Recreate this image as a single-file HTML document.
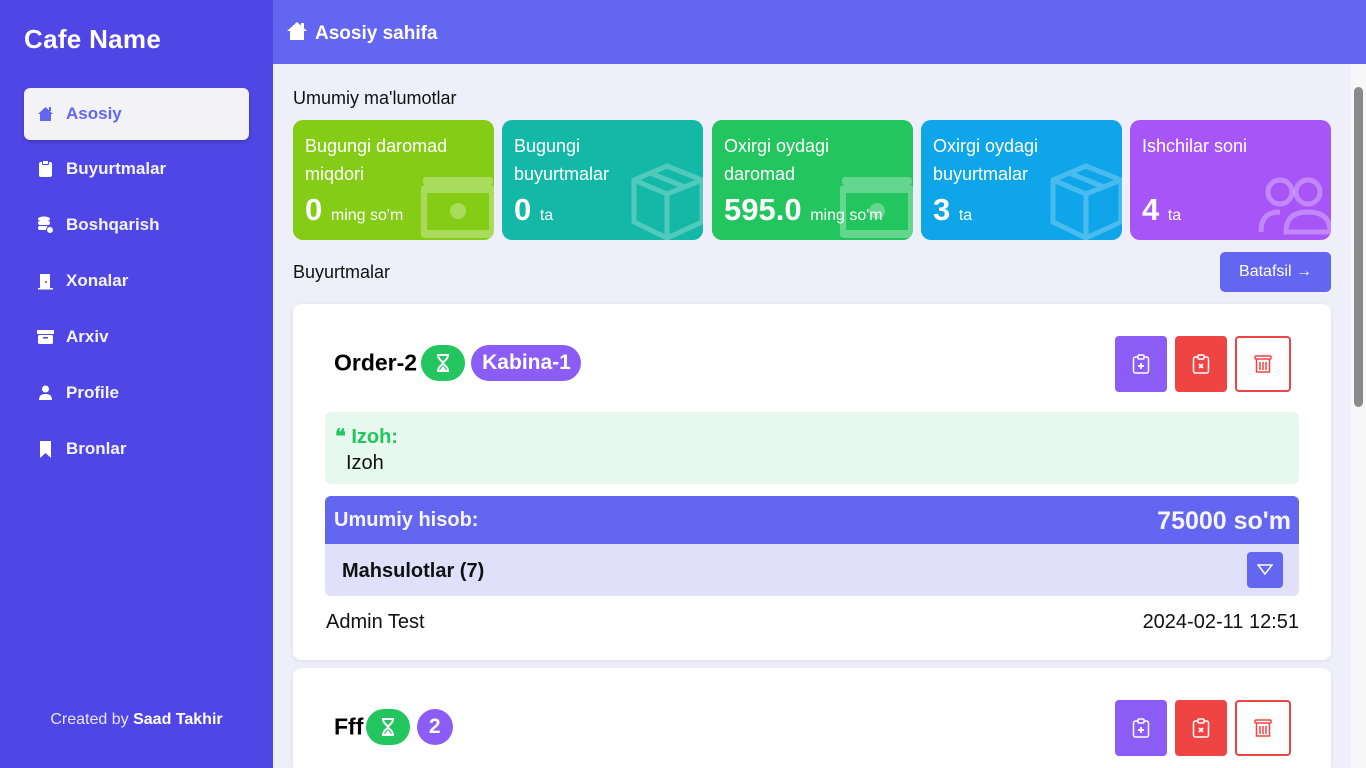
<!DOCTYPE html>
<html><head><meta charset="utf-8"><style>
*{box-sizing:border-box;margin:0;padding:0}
html{width:1366px;height:768px;overflow:hidden}
body{width:1366px;height:768px;overflow:hidden;font-family:"Liberation Sans",sans-serif;background:#efeffb;position:relative}
.a{position:absolute}
.side{left:0;top:0;width:273px;height:768px;background:#4f46e5;color:#fff}
.nav{position:absolute;left:24px;width:225px;height:52px;display:flex;align-items:center;font-weight:bold;font-size:17px;color:#f3f3fb}
.nav svg{margin-left:13px;margin-right:12px}
.hdr{left:273px;top:0;width:1093px;height:64px;background:#6366f1;color:#fff;font-weight:bold;font-size:19px}
.card{position:absolute;top:120px;width:201px;height:120px;border-radius:10px;color:#fff;overflow:hidden;padding:12px 12px}
.card .t{font-size:18px;line-height:28px;position:relative;z-index:2}
.card .v{position:absolute;left:12px;top:72px;font-size:31px;font-weight:bold;z-index:2;white-space:nowrap}
.card .v small{font-size:16px;font-weight:normal}
.card svg{position:absolute;z-index:1}
.ord{position:absolute;left:293px;width:1038px;background:#fff;border-radius:8px;box-shadow:0 1px 4px rgba(0,0,0,.08);overflow:hidden}
.btn{position:absolute;width:52px;height:56px;border-radius:4px;display:flex;align-items:center;justify-content:center}
.badge{display:inline-flex;align-items:center;justify-content:center;height:36px;border-radius:18px;color:#fff;font-weight:bold;font-size:21px;vertical-align:middle}
</style></head><body>
<div class="a side">
 <div class="a" style="left:24px;top:24px;font-size:26px;font-weight:bold;letter-spacing:0.3px">Cafe Name</div>
 <div class="nav" style="top:88px;background:#f3f3f6;border-radius:6px;color:#6366f1;box-shadow:0 2px 4px rgba(0,0,0,.2)"><svg width="17" height="16" viewBox="0 0 17 16"><path d="M8.5 1 L1 8 H3 V15 H14 V8 H16 Z" fill="#6366f1"/><rect x="12" y="1" width="2" height="4" fill="#6366f1"/></svg>Asosiy</div>
 <div class="nav" style="top:143px"><svg width="17" height="18" viewBox="0 0 17 18"><rect x="2" y="2" width="13" height="15" rx="2" fill="#fff"/><rect x="5.5" y="0.5" width="6" height="4" rx="1" fill="#fff" stroke="#4f46e5"/></svg>Buyurtmalar</div>
 <div class="nav" style="top:199px"><svg width="17" height="18" viewBox="0 0 17 18"><ellipse cx="7" cy="3" rx="6" ry="2.5" fill="#fff"/><rect x="1" y="5" width="12" height="4" rx="2" fill="#fff"/><rect x="1" y="10" width="10" height="4" rx="2" fill="#fff"/><circle cx="13" cy="14" r="3.5" fill="#fff" stroke="#4f46e5"/></svg>Boshqarish</div>
 <div class="nav" style="top:255px"><svg width="17" height="18" viewBox="0 0 17 18"><path d="M3 17V2H13V17" fill="#fff"/><rect x="1" y="16" width="15" height="1.5" fill="#fff"/><circle cx="9" cy="10" r="1" fill="#4f46e5"/></svg>Xonalar</div>
 <div class="nav" style="top:311px"><svg width="17" height="16" viewBox="0 0 17 16"><rect x="0" y="1" width="17" height="4" fill="#fff"/><rect x="1" y="6" width="15" height="9" rx="1.5" fill="#fff"/><rect x="6" y="8" width="5" height="1.5" fill="#4f46e5"/></svg>Arxiv</div>
 <div class="nav" style="top:367px"><svg width="17" height="16" viewBox="0 0 17 16"><circle cx="8.5" cy="4" r="3.5" fill="#fff"/><path d="M2 15C2 10 5 9 8.5 9S15 10 15 15Z" fill="#fff"/></svg>Profile</div>
 <div class="nav" style="top:423px"><svg width="17" height="18" viewBox="0 0 17 18"><path d="M3 1H14V18L8.5 13L3 18Z" fill="#fff"/></svg>Bronlar</div>
 <div class="a" style="left:0;width:273px;top:711px;text-align:center;font-size:16px;color:#e5e5fa">Created by <b style="color:#fff">Saad Takhir</b></div>
</div>
<div class="a hdr"><svg class="a" style="left:13px;top:21px" width="22" height="20" viewBox="0 0 22 20"><path d="M11 1L1 10H4V19H18V10H21Z" fill="#fff"/><rect x="15" y="2" width="3" height="5" fill="#fff"/></svg><span class="a" style="left:42px;top:23px">Asosiy sahifa</span></div>
<div class="a" style="left:1351px;top:64px;width:15px;height:704px;background:#f7f7f7"><div class="a" style="left:3px;top:23px;width:9px;height:320px;background:#8a8a8a;border-radius:5px"></div></div>
<div class="a" style="left:293px;top:88px;font-size:18px;color:#111">Umumiy ma'lumotlar</div>

<div class="card" style="left:293px;background:#84cc16"><div class="t">Bugungi daromad<br>miqdori</div><div class="v">0 <small>ming so'm</small></div>
<svg style="left:128px;top:55px" width="74" height="65" viewBox="0 0 74 65"><rect x="2" y="2" width="70" height="8" rx="3" fill="rgba(255,255,255,.3)"/><rect x="2" y="14" width="70" height="45" rx="3" fill="none" stroke="rgba(255,255,255,.3)" stroke-width="8"/><circle cx="37" cy="36" r="8" fill="rgba(255,255,255,.3)"/></svg></div>
<div class="card" style="left:502px;background:#14b8a6"><div class="t">Bugungi<br>buyurtmalar</div><div class="v">0 <small>ta</small></div>
<svg style="left:128px;top:42px" width="75" height="80" viewBox="0 0 75 80"><path d="M37 4L72 18V60L37 76L4 60V18Z M4 18L37 32L72 18 M37 32V76 M20 11L55 25" fill="none" stroke="rgba(255,255,255,.25)" stroke-width="5"/></svg></div>
<div class="card" style="left:712px;background:#22c55e"><div class="t">Oxirgi oydagi<br>daromad</div><div class="v">595.0 <small>ming so'm</small></div>
<svg style="left:128px;top:55px" width="74" height="65" viewBox="0 0 74 65"><rect x="2" y="2" width="70" height="8" rx="3" fill="rgba(255,255,255,.3)"/><rect x="2" y="14" width="70" height="45" rx="3" fill="none" stroke="rgba(255,255,255,.3)" stroke-width="8"/><circle cx="37" cy="36" r="8" fill="rgba(255,255,255,.3)"/></svg></div>
<div class="card" style="left:921px;background:#0ea5e9"><div class="t">Oxirgi oydagi<br>buyurtmalar</div><div class="v">3 <small>ta</small></div>
<svg style="left:128px;top:42px" width="75" height="80" viewBox="0 0 75 80"><path d="M37 4L72 18V60L37 76L4 60V18Z M4 18L37 32L72 18 M37 32V76 M20 11L55 25" fill="none" stroke="rgba(255,255,255,.25)" stroke-width="5"/></svg></div>
<div class="card" style="left:1130px;background:#a855f7"><div class="t">Ishchilar soni</div><div class="v">4 <small>ta</small></div>
<svg style="left:128px;top:55px" width="75" height="60" viewBox="0 0 75 60"><circle cx="22" cy="17" r="12" fill="none" stroke="rgba(255,255,255,.3)" stroke-width="5"/><circle cx="50" cy="17" r="12" fill="none" stroke="rgba(255,255,255,.3)" stroke-width="5"/><path d="M3 57C3 42 10 37 22 37 M28 57C28 42 37 37 50 37S72 42 72 57Z" fill="none" stroke="rgba(255,255,255,.3)" stroke-width="5"/></svg></div>

<div class="a" style="left:293px;top:262px;font-size:18px;color:#111">Buyurtmalar</div>
<div class="a" style="left:1220px;top:252px;width:111px;height:40px;background:#6366f1;border-radius:5px;color:#fff;font-size:16px;text-align:center;line-height:40px">Batafsil →</div>

<div class="ord" style="top:304px;height:356px">
 <div class="a" style="left:41px;top:41px;font-size:23px;font-weight:bold;color:#000;white-space:nowrap"><span style="vertical-align:middle">Order-2</span><span class="badge" style="width:44px;background:#22c55e;margin-left:4px"><svg width="14" height="18" viewBox="0 0 14 18"><path d="M1 1H13M1 17H13M2 1C2 6 7 7 7 9S2 12 2 17H12C12 12 7 11 7 9S12 6 12 1" fill="none" stroke="#fff" stroke-width="2"/><path d="M4 16L7 12L10 16Z" fill="#fff"/></svg></span> <span class="badge" style="width:110px;background:#8b5cf6">Kabina-1</span></div>
 <div class="btn" style="left:822px;top:32px;background:#8b5cf6"><svg width="18" height="20" viewBox="0 0 18 20"><rect x="1.5" y="3" width="15" height="16" rx="2" fill="none" stroke="#fff" stroke-width="1.5"/><rect x="6" y="1" width="6" height="4" rx="1" fill="#8b5cf6" stroke="#fff" stroke-width="1.5"/><path d="M9 9V15M6 12H12" stroke="#fff" stroke-width="1.8"/></svg></div>
 <div class="btn" style="left:882px;top:32px;background:#ef4444"><svg width="18" height="20" viewBox="0 0 18 20"><rect x="1.5" y="3" width="15" height="16" rx="2" fill="none" stroke="#fff" stroke-width="1.5"/><rect x="6" y="1" width="6" height="4" rx="1" fill="#ef4444" stroke="#fff" stroke-width="1.5"/><path d="M7 10L11 14M11 10L7 14" stroke="#fff" stroke-width="1.8"/></svg></div>
 <div class="btn" style="left:942px;top:32px;width:56px;border:2px solid #ef4444;background:#fff"><svg width="18" height="20" viewBox="0 0 18 20"><rect x="1" y="2" width="16" height="3" rx="1" fill="none" stroke="#ef4444" stroke-width="1.5"/><path d="M2.5 5.5V18H15.5V5.5M6 8V16M9 8V16M12 8V16" fill="none" stroke="#ef4444" stroke-width="1.5"/></svg></div>
 <div class="a" style="left:32px;top:108px;width:974px;height:72px;background:#e7f8ee;border-radius:6px">
  <div class="a" style="left:10px;top:12px;font-size:20px;font-weight:bold;color:#22c55e">❝ Izoh:</div>
  <div class="a" style="left:21px;top:40px;font-size:20px;color:#111">Izoh</div>
 </div>
 <div class="a" style="left:32px;top:192px;width:974px;height:100px;background:#e0e0fa;border-radius:6px;overflow:hidden">
  <div class="a" style="left:0;top:0;width:974px;height:48px;background:#6366f1;color:#f5f5ff;font-weight:bold">
   <span class="a" style="left:9px;top:13px;font-size:20px">Umumiy hisob:</span>
   <span class="a" style="right:8px;top:11px;font-size:25px">75000 so'm</span></div>
  <div class="a" style="left:17px;top:64px;font-size:20px;font-weight:bold;color:#111">Mahsulotlar (7)</div>
  <div class="a" style="left:922px;top:56px;width:36px;height:36px;background:#6366f1;border-radius:4px"><svg class="a" style="left:10px;top:12px" width="16" height="12" viewBox="0 0 16 12"><path d="M1 1H15L8 10Z" fill="none" stroke="#fff" stroke-width="1.5"/></svg></div>
 </div>
 <div class="a" style="left:33px;top:307px;font-size:20px;color:#111">Admin Test</div>
 <div class="a" style="right:32px;top:307px;font-size:20px;color:#111">2024-02-11 12:51</div>
</div>

<div class="ord" style="top:668px;height:100px;border-radius:8px 8px 0 0">
 <div class="a" style="left:41px;top:41px;font-size:23px;font-weight:bold;color:#000;white-space:nowrap"><span style="vertical-align:middle">Fff</span><span class="badge" style="width:44px;background:#22c55e;margin-left:3px"><svg width="14" height="18" viewBox="0 0 14 18"><path d="M1 1H13M1 17H13M2 1C2 6 7 7 7 9S2 12 2 17H12C12 12 7 11 7 9S12 6 12 1" fill="none" stroke="#fff" stroke-width="2"/><path d="M4 16L7 12L10 16Z" fill="#fff"/></svg></span> <span class="badge" style="width:36px;background:#8b5cf6">2</span></div>
 <div class="btn" style="left:822px;top:32px;background:#8b5cf6"><svg width="18" height="20" viewBox="0 0 18 20"><rect x="1.5" y="3" width="15" height="16" rx="2" fill="none" stroke="#fff" stroke-width="1.5"/><rect x="6" y="1" width="6" height="4" rx="1" fill="#8b5cf6" stroke="#fff" stroke-width="1.5"/><path d="M9 9V15M6 12H12" stroke="#fff" stroke-width="1.8"/></svg></div>
 <div class="btn" style="left:882px;top:32px;background:#ef4444"><svg width="18" height="20" viewBox="0 0 18 20"><rect x="1.5" y="3" width="15" height="16" rx="2" fill="none" stroke="#fff" stroke-width="1.5"/><rect x="6" y="1" width="6" height="4" rx="1" fill="#ef4444" stroke="#fff" stroke-width="1.5"/><path d="M7 10L11 14M11 10L7 14" stroke="#fff" stroke-width="1.8"/></svg></div>
 <div class="btn" style="left:942px;top:32px;width:56px;border:2px solid #ef4444;background:#fff"><svg width="18" height="20" viewBox="0 0 18 20"><rect x="1" y="2" width="16" height="3" rx="1" fill="none" stroke="#ef4444" stroke-width="1.5"/><path d="M2.5 5.5V18H15.5V5.5M6 8V16M9 8V16M12 8V16" fill="none" stroke="#ef4444" stroke-width="1.5"/></svg></div>
</div>
</body></html>
